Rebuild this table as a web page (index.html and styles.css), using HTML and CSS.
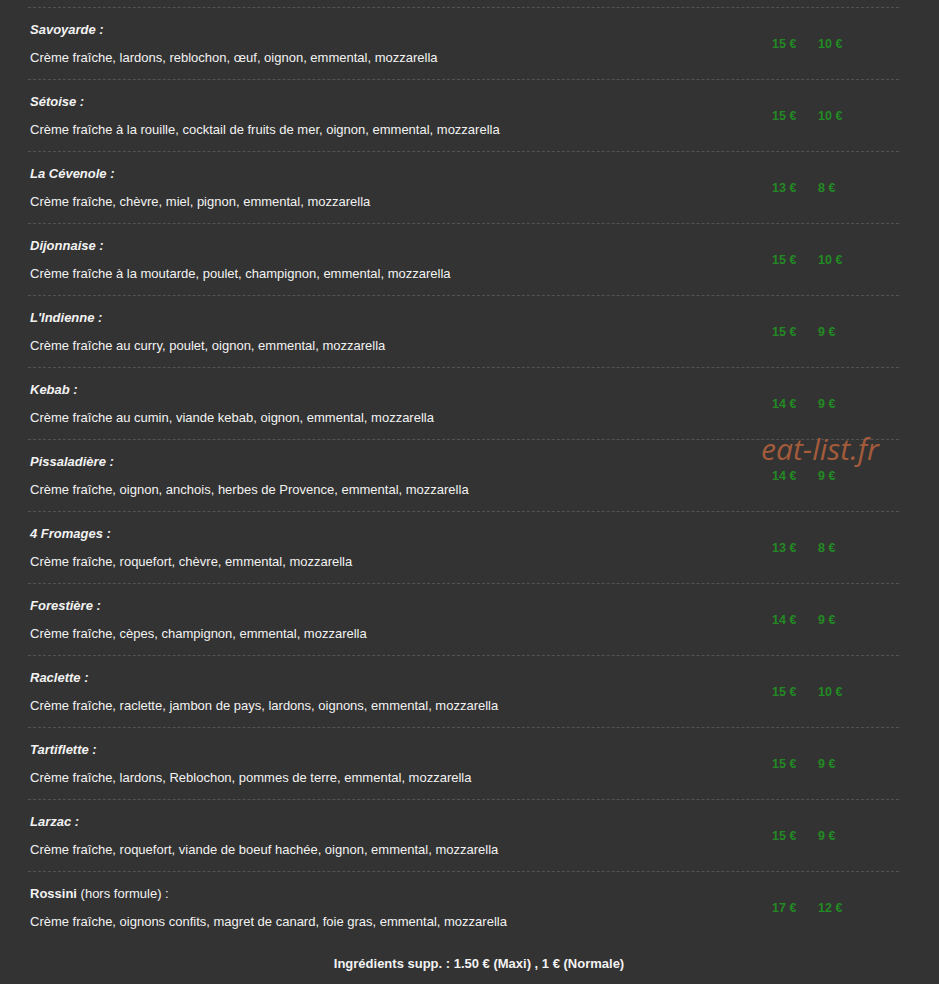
FILE: index.html
```html
<!DOCTYPE html>
<html lang="fr">
<head>
<meta charset="utf-8">
<title>Pizzas - crème fraîche</title>
<link rel="stylesheet" href="styles.css">
</head>
<body>
<div class="menu">
  <div class="item">
    <div class="info"><p class="name">Savoyarde :</p><p class="desc">Crème fraîche, lardons, reblochon, œuf, oignon, emmental, mozzarella</p></div>
    <div class="prices"><span>15 €</span><span>10 €</span></div>
  </div>
  <div class="item">
    <div class="info"><p class="name">Sétoise :</p><p class="desc">Crème fraîche à la rouille, cocktail de fruits de mer, oignon, emmental, mozzarella</p></div>
    <div class="prices"><span>15 €</span><span>10 €</span></div>
  </div>
  <div class="item">
    <div class="info"><p class="name">La Cévenole :</p><p class="desc">Crème fraîche, chèvre, miel, pignon, emmental, mozzarella</p></div>
    <div class="prices"><span>13 €</span><span>8 €</span></div>
  </div>
  <div class="item">
    <div class="info"><p class="name">Dijonnaise :</p><p class="desc">Crème fraîche à la moutarde, poulet, champignon, emmental, mozzarella</p></div>
    <div class="prices"><span>15 €</span><span>10 €</span></div>
  </div>
  <div class="item">
    <div class="info"><p class="name">L'Indienne :</p><p class="desc">Crème fraîche au curry, poulet, oignon, emmental, mozzarella</p></div>
    <div class="prices"><span>15 €</span><span>9 €</span></div>
  </div>
  <div class="item">
    <div class="info"><p class="name">Kebab :</p><p class="desc">Crème fraîche au cumin, viande kebab, oignon, emmental, mozzarella</p></div>
    <div class="prices"><span>14 €</span><span>9 €</span></div>
  </div>
  <div class="item">
    <div class="info"><p class="name">Pissaladière :</p><p class="desc">Crème fraîche, oignon, anchois, herbes de Provence, emmental, mozzarella</p></div>
    <div class="prices"><span>14 €</span><span>9 €</span></div>
  </div>
  <div class="item">
    <div class="info"><p class="name">4 Fromages :</p><p class="desc">Crème fraîche, roquefort, chèvre, emmental, mozzarella</p></div>
    <div class="prices"><span>13 €</span><span>8 €</span></div>
  </div>
  <div class="item">
    <div class="info"><p class="name">Forestière :</p><p class="desc">Crème fraîche, cèpes, champignon, emmental, mozzarella</p></div>
    <div class="prices"><span>14 €</span><span>9 €</span></div>
  </div>
  <div class="item">
    <div class="info"><p class="name">Raclette :</p><p class="desc">Crème fraîche, raclette, jambon de pays, lardons, oignons, emmental, mozzarella</p></div>
    <div class="prices"><span>15 €</span><span>10 €</span></div>
  </div>
  <div class="item">
    <div class="info"><p class="name">Tartiflette :</p><p class="desc">Crème fraîche, lardons, Reblochon, pommes de terre, emmental, mozzarella</p></div>
    <div class="prices"><span>15 €</span><span>9 €</span></div>
  </div>
  <div class="item">
    <div class="info"><p class="name">Larzac :</p><p class="desc">Crème fraîche, roquefort, viande de boeuf hachée, oignon, emmental, mozzarella</p></div>
    <div class="prices"><span>15 €</span><span>9 €</span></div>
  </div>
  <div class="item last">
    <div class="info"><p class="name plain"><b>Rossini</b> (hors formule) :</p><p class="desc">Crème fraîche, oignons confits, magret de canard, foie gras, emmental, mozzarella</p></div>
    <div class="prices"><span>17 €</span><span>12 €</span></div>
  </div>
  <p class="extra">Ingrédients supp. : 1.50 € (Maxi) , 1 € (Normale)</p>
</div>
<div class="watermark">eat-list.fr</div>
</body>
</html>
```

FILE: styles.css
```css
html, body {
  margin: 0;
  padding: 0;
  background: #333333;
}
body {
  font-family: "Liberation Sans", Arial, sans-serif;
  font-size: 13px;
  color: #f2f2f2;
}
.menu {
  margin: 7px 0 0 28px;
  width: 871px;
}
.item {
  display: flex;
  align-items: center;
  border-top: 1px dashed #535353;
  height: 71px;
}
.info {
  flex: 1;
  padding-left: 2px;
}
.info p {
  margin: 0;
  line-height: 16px;
}
.name {
  font-weight: bold;
  font-style: italic;
  margin-bottom: 12px !important;
}
.name.plain {
  font-weight: normal;
  font-style: normal;
}
.prices {
  display: flex;
  width: 92px;
  margin-right: 35px;
  font-size: 12.5px;
  font-weight: bold;
  color: #238a23;
}
.prices span {
  width: 46px;
}
.extra {
  margin: 13px 0 0;
  padding-left: 31px;
  text-align: center;
  font-weight: bold;
  line-height: 16px;
}
.watermark {
  position: absolute;
  left: 761px;
  top: 428px;
  font-family: "Open Sans", sans-serif;
  font-style: italic;
  font-size: 30px;
  color: #b0603c;
  opacity: 0.9;
}
```
